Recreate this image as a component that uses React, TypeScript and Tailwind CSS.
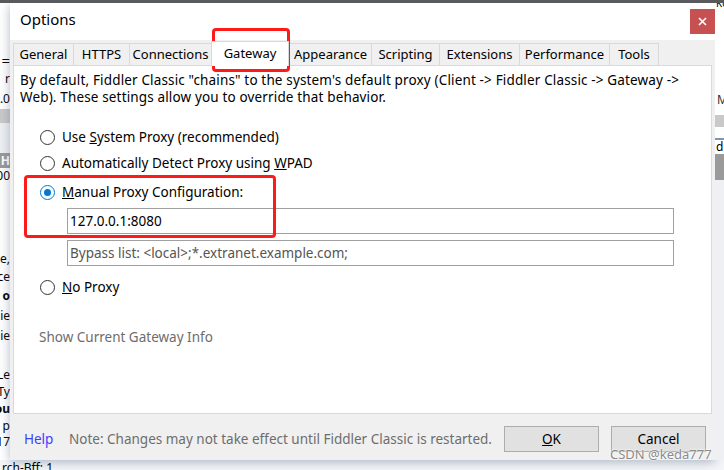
import React from "react";

const tabs = [
  { label: "General", w: "w-[60px]" },
  { label: "HTTPS", w: "w-[56px]" },
  { label: "Connections", w: "w-[82px]" },
  { label: "Gateway", w: "w-[78px]", active: true },
  { label: "Appearance", w: "w-[82px]" },
  { label: "Scripting", w: "w-[68px]" },
  { label: "Extensions", w: "w-[80px]" },
  { label: "Performance", w: "w-[90px]" },
  { label: "Tools", w: "w-[50px]" },
];

function Radio({ checked }: { checked?: boolean }) {
  return (
    <span
      className={`w-[15px] h-[15px] rounded-full border bg-white flex items-center justify-center shrink-0 ${
        checked ? "border-[#0078d7]" : "border-[#333333]"
      }`}
    >
      {checked && <span className="w-[7px] h-[7px] rounded-full bg-[#0078d7]" />}
    </span>
  );
}

function RadioRow({ checked, children }: { checked?: boolean; children: React.ReactNode }) {
  return (
    <div className="flex items-center gap-[7px] pl-[26px] h-[20px]">
      <Radio checked={checked} />
      <span className="text-[#000]">{children}</span>
    </div>
  );
}

// background app pieces peeking out at the left edge
const leftBits: { t: string; h: string; cls?: string }[] = [
  { t: "", h: "h-[48px]" },
  { t: "=", h: "h-[18px]", cls: "text-[15px]" },
  { t: "r", h: "h-[20px]" },
  { t: ".0", h: "h-[20px]" },
  { t: "", h: "h-[14px]", cls: "bg-[#c9c9c9]" },
  { t: "", h: "h-[30px]", cls: "bg-[#eef0f2]" },
  { t: "H", h: "h-[15px]", cls: "bg-[#9a9a9a] text-white font-bold" },
  { t: "00", h: "h-[16px]" },
  { t: "", h: "h-[66px]" },
  { t: "e,", h: "h-[18px]" },
  { t: "ce", h: "h-[18px]" },
  { t: "o", h: "h-[20px]", cls: "font-bold" },
  { t: "ie", h: "h-[20px]" },
  { t: "ie", h: "h-[20px]" },
  { t: "", h: "h-[20px]" },
  { t: "Le", h: "h-[17px]" },
  { t: "Ty", h: "h-[17px]" },
  { t: "ou", h: "h-[18px]", cls: "font-bold" },
  { t: "p", h: "h-[16px]" },
  { t: "17", h: "h-[16px]" },
];

export default function App() {
  return (
    <div className="w-[724px] h-[470px] overflow-hidden bg-[#f4f6f8] flex flex-col font-['Noto_Sans',sans-serif] text-[13.5px] text-black relative">
      {/* top strip of background window */}
      <div className="h-[3px] bg-[#5a5a5a] shrink-0" />

      <div className="flex h-[457px] shrink-0">
        {/* left edge of background app */}
        <div className="w-[10px] shrink-0 overflow-hidden flex flex-col bg-white text-[12px] leading-none">
          {leftBits.map((b, i) => (
            <div key={i} className={`${b.h} flex items-center justify-end whitespace-nowrap ${b.cls ?? ""}`}>
              {b.t}
            </div>
          ))}
        </div>

        {/* dialog */}
        <div className="w-[705px] shrink-0 bg-white flex flex-col shadow-[0_2px_10px_rgba(80,100,130,0.45)]">
          <div className="h-[37px] flex items-center justify-between shrink-0">
            <span className="pl-[10px] text-[15px] pb-[5px]">Options</span>
            <button className="w-[25px] h-[25px] bg-[#c75050] text-white flex items-center justify-center">
              <svg width="9" height="9" viewBox="0 0 9 9">
                <path d="M1 1 L8 8 M8 1 L1 8" stroke="white" strokeWidth="1.6" />
              </svg>
            </button>
          </div>

          <div className="flex-1 bg-[#f0f0f0] flex flex-col">
            {/* tabs */}
            <div className="h-[25px] flex items-end pl-[3px] shrink-0 text-[13px]">
              {tabs.map((t) =>
                t.active ? (
                  <div
                    key={t.label}
                    className={`${t.w} h-[25px] -mb-px z-10 bg-white border border-b-0 border-[#d9d9d9] flex items-start justify-center pt-[2px]`}
                  >
                    {t.label}
                  </div>
                ) : (
                  <div
                    key={t.label}
                    className={`${t.w} h-[22px] bg-[#f0f0f0] border border-b-0 border-r-0 last:border-r border-[#d9d9d9] flex items-center justify-center`}
                  >
                    {t.label}
                  </div>
                )
              )}
            </div>

            {/* tab panel */}
            <div className="mx-[3px] h-[349px] bg-white border border-[#d9d9d9] flex flex-col shrink-0">
              <p className="px-[6px] pt-[6px] leading-[17px] tracking-[0.15px]">
                By default, Fiddler Classic "chains" to the system's default proxy (Client -&gt; Fiddler Classic -&gt; Gateway -&gt;
                <br />
                Web). These settings allow you to override that behavior.
              </p>

              <div className="flex flex-col mt-[21px] gap-[6px]">
                <RadioRow>
                  Use <u>S</u>ystem Proxy (recommended)
                </RadioRow>
                <RadioRow>
                  Automatically Detect Proxy using <u>W</u>PAD
                </RadioRow>
                <div className="mt-[3px]">
                  <RadioRow checked>
                    <u>M</u>anual Proxy Configuration:
                  </RadioRow>
                </div>
              </div>

              <div className="flex flex-col gap-[6px] mt-[6px] pl-[53px] pr-[37px]">
                <div className="h-[26px] border border-[#a0a0a0] flex items-center px-[2px]">127.0.0.1:8080</div>
                <div className="h-[26px] border border-[#a0a0a0] flex items-center px-[2px] text-[#555555] text-[13.5px]">
                  Bypass list: &lt;local&gt;;*.extranet.example.com;
                </div>
              </div>

              <div className="mt-[11px]">
                <RadioRow>
                  <u>N</u>o Proxy
                </RadioRow>
              </div>

              <div className="pl-[25px] mt-[30px] text-[#6d6d6d]">Show Current Gateway Info</div>
            </div>

            {/* footer */}
            <div className="flex-1 flex items-center pl-[14px] pr-[9px] pt-[4px]">
              <span className="text-[#3d3dff] w-[45px]">Help</span>
              <span className="text-[#6d6d6d]">
                Note: Changes may not take effect until Fiddler Classic is restarted.
              </span>
              <div className="ml-auto flex gap-[12px]">
                <button className="w-[95px] h-[26px] bg-[#e1e1e1] border border-[#adadad] flex items-center justify-center">
                  <span>
                    <u>O</u>K
                  </span>
                </button>
                <button className="w-[95px] h-[26px] bg-[#e1e1e1] border border-[#adadad] flex items-center justify-center">
                  Cancel
                </button>
              </div>
            </div>
          </div>
        </div>

        {/* right edge of background app */}
        <div className="flex-1 overflow-hidden flex flex-col bg-[#f2f4f6] text-[12px] leading-none">
          <div className="h-[6px] bg-white text-[10px] leading-none pl-[1px] overflow-hidden">
            <span className="block -translate-y-[5px]">Ko</span>
          </div>
          <div className="h-[84px] bg-white" />
          <div className="h-[14px] bg-white flex items-center pl-[2px] text-[#333]">M</div>
          <div className="h-[8px] bg-white" />
          <div className="h-[12px] bg-[#c9c9c9]" />
          <div className="h-[11px] bg-white" />
          <div className="h-[2px] bg-[#8096b0]" />
          <div className="h-[14px] bg-white flex items-center pl-[1px]">de</div>
          <div className="h-[26px] bg-[#9a9a9a]" />
          <div className="flex-1 bg-[#eef0f3]" />
        </div>
      </div>

      {/* bottom strip */}
      <div className="flex-1 flex items-end text-[12px] leading-none pl-[2px] overflow-hidden">
        <span className="translate-y-[4px]">rch-Bff: 1</span>
      </div>

      {/* annotation boxes */}
      <div className="absolute left-[212px] top-[28px] w-[78px] h-[44px] border-[3px] border-[#ff1a1a] rounded-[4px]" />
      <div className="absolute left-[24px] top-[175px] w-[252px] h-[63px] border-[3px] border-[#ff1a1a] rounded-[4px]" />

      {/* watermark */}
      <div className="absolute left-[610px] top-[448px] text-[13px] text-[#8a8a8a] [text-shadow:0_0_2px_white,0_0_2px_white] leading-none">
        CSDN @keda777
      </div>
    </div>
  );
}
